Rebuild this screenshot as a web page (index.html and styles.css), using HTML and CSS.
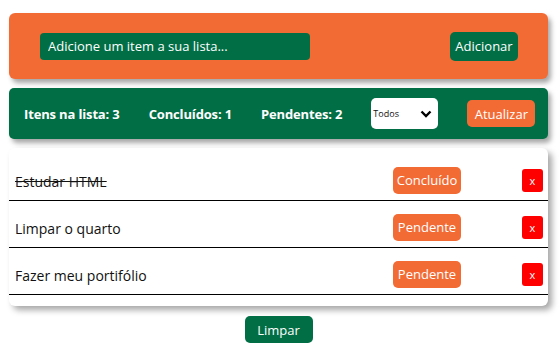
FILE: index.html
```html
<!DOCTYPE html>
<html lang="pt-BR">

<head>
    <meta charset="UTF-8">
    <meta name="viewport" content="width=device-width, initial-scale=1.0">

    <title>Lista de tarefas</title>

    <link rel="stylesheet" href="styles.css">
</head>

<body>
    <main>
        <header class="topo">
            <input type="text" class="campo" placeholder="Adicione um item a sua lista...">
            <button class="btn verde">Adicionar</button>
        </header>

        <section class="resumo">
            <p>Itens na lista: 3</p>
            <p>Concluídos: 1</p>
            <p>Pendentes: 2</p>

            <div class="filtro">
                <select>
                    <option>Todos</option>
                    <option>Concluídos</option>
                    <option>Pendentes</option>
                </select>
                <svg class="seta" width="12" height="8" viewBox="0 0 12 8">
                    <path d="M1.5 1.5 L6 6 L10.5 1.5" fill="none" stroke="#000" stroke-width="2.4" />
                </svg>
            </div>

            <button class="btn laranja">Atualizar</button>
        </section>

        <ul class="lista">
            <li class="item">
                <span class="texto feito">Estudar HTML</span>
                <button class="btn laranja status">Concluído</button>
                <button class="remover">x</button>
            </li>
            <li class="item">
                <span class="texto">Limpar o quarto</span>
                <button class="btn laranja status">Pendente</button>
                <button class="remover">x</button>
            </li>
            <li class="item">
                <span class="texto">Fazer meu portifólio</span>
                <button class="btn laranja status">Pendente</button>
                <button class="remover">x</button>
            </li>
        </ul>

        <div class="rodape">
            <button class="btn verde">Limpar</button>
        </div>
    </main>
</body>

</html>
```

FILE: styles.css
```css
* {
    margin: 0;
    padding: 0;
    box-sizing: border-box;
}

body {
    width: 560px;
    font-family: "Open Sans", "Noto Sans", sans-serif;
    font-size: 13px;
    color: #111;
}

main {
    width: 539px;
    margin: 13px 0 0 9px;

    display: flex;
    flex-direction: column;
}

.topo {
    height: 66px;

    display: flex;
    align-items: center;
    justify-content: space-between;

    padding: 0 30px 0 31px;

    background-color: #f36b34;
    border-radius: 6px;
    box-shadow: 3px 4px 5px rgba(0, 0, 0, 0.35);
}

.campo {
    width: 270px;
    height: 27px;

    padding-left: 8px;

    font-family: inherit;
    font-size: 13px;
    color: white;

    background-color: #016e45;
    border: none;
    border-radius: 4px;
    outline: none;
}

.campo::placeholder {
    color: white;
}

.btn {
    width: 68px;
    height: 28px;

    font-family: inherit;
    font-size: 13px;
    color: white;

    border: none;
    border-radius: 5px;
}

.verde {
    background-color: #016e45;
}

.laranja {
    background-color: #f36b34;
}

.topo .btn {
    height: 29px;
}

.resumo {
    height: 51px;
    margin-top: 9px;

    display: flex;
    align-items: center;
    gap: 29px;

    padding-left: 15px;

    background-color: #016e45;
    border-radius: 5px;
    box-shadow: 3px 4px 5px rgba(0, 0, 0, 0.35);

    color: white;
    font-weight: 700;
}

.resumo p {
    letter-spacing: -0.15px;
}

.filtro {
    position: relative;
    width: 67px;
    height: 31px;
}

.filtro select {
    width: 100%;
    height: 100%;

    appearance: none;
    padding-left: 2px;

    font-family: inherit;
    font-size: 9px;
    color: #111;

    background-color: white;
    border: none;
    border-radius: 5px;
}

.seta {
    position: absolute;
    right: 6px;
    top: 12px;
    pointer-events: none;
}

.resumo .btn {
    height: 27px;
}

.lista {
    list-style: none;

    margin-top: 9px;
    padding: 6px 0 11px;

    background-color: white;
    border-radius: 6px;
    box-shadow: 4px 4px 6px rgba(0, 0, 0, 0.35);
}

.item {
    height: 47px;

    display: flex;
    align-items: center;

    padding: 6px 5px 0 6px;

    border-bottom: 1px solid black;
}

.texto {
    flex: 1;
    font-size: 14px;
    padding-top: 2px;
}

.feito {
    text-decoration: line-through;
}

.status {
    height: 27px;
}

.remover {
    width: 21px;
    height: 23px;
    margin-left: 61px;

    font-family: inherit;
    font-size: 11px;
    color: white;

    background-color: #ff0000;
    border: none;
    border-radius: 3px;
}

.rodape {
    display: flex;
    justify-content: center;

    margin-top: 10px;
}

.rodape .btn {
    height: 27px;
}
```
